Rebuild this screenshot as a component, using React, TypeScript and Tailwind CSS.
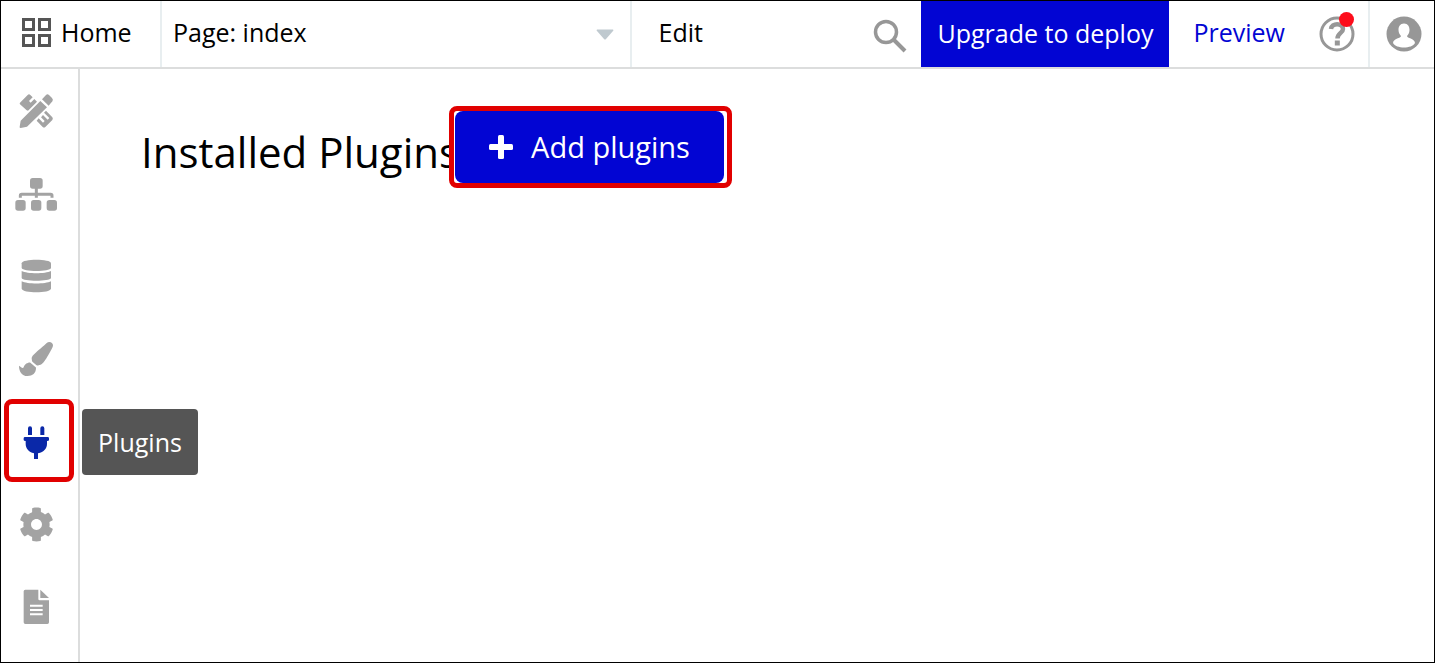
import React from 'react';
import { FaCog, FaPaintBrush } from 'react-icons/fa';

const DesignIcon: React.FC = () => (
  <svg viewBox="45 30 126 126" className="size-[42px]" fill="currentColor" aria-hidden="true">
    <path d="M62 122 L121 63 L141 82 L81 140 L62 144 Q58 144 59 140 Z" />
    <path d="M126 58 L138 45 Q142 41 147 45 L156 54 Q161 59 157 64 L146 77 Z" />
    <path d="M60 68 L83 45 Q87 41 91 45 L98 52 L87 63 L92 68 L103 57 L111 65 L84 92 L80 91 L60 73 Q58 70 60 68 Z" />
    <path d="M138 92 L157 112 Q160 116 157 120 L136 141 Q132 144 128 141 L110 122 L116 115 L129 128 L134 123 L123 112 L129 105 L143 119 L148 114 L132 98 Z" />
  </svg>
);

const SitemapIcon: React.FC = () => (
  <svg viewBox="45 276 126 126" className="size-[42px]" fill="currentColor" aria-hidden="true">
    <rect x="90" y="291" width="38" height="32" rx="8" />
    <rect x="46" y="357" width="31" height="32" rx="8" />
    <rect x="93" y="357" width="31" height="32" rx="8" />
    <rect x="140" y="357" width="31" height="32" rx="8" />
    <path
      d="M109 320V350M61 350V344Q61 340 65 340H152Q156 340 156 344V350"
      fill="none"
      stroke="currentColor"
      strokeWidth="9"
    />
  </svg>
);

const DataIcon: React.FC = () => (
  <svg viewBox="45 45 126 126" className="size-[42px]" fill="currentColor" aria-hidden="true">
    <path d="M65 70C65 56 153 56 153 70V84C150 96 68 96 65 84Z" />
    <path d="M65 93C82 102 136 102 153 93V114C150 125 68 125 65 114Z" />
    <path d="M65 124C82 133 136 133 153 124V146C150 160 68 160 65 146Z" />
  </svg>
);

const PlugIcon: React.FC = () => (
  <svg viewBox="45 90 126 126" className="size-[42px]" fill="currentColor" aria-hidden="true">
    <path d="M84 132V112Q84 106 90 106T96 112V132ZM121 132V112Q121 106 127 106T133 112V132Z" />
    <path d="M75 138H143Q147 138 147 142V147Q147 150 141 150V158C141 172 132 183 114 187V204H102V187C86 183 77 172 77 158V150Q71 150 71 147V142Q71 138 75 138Z" />
  </svg>
);

const LogsIcon: React.FC = () => (
  <svg viewBox="45 288 126 126" className="size-[42px]" fill="currentColor" aria-hidden="true">
    <path d="M76 299H115V327Q115 331 119 331H147V397Q147 402 142 402H76Q71 402 71 397V304Q71 299 76 299Z" />
    <path d="M121 299L147 324H121Z" />
    <path d="M90 347H128M90 360H128M90 373H128" stroke="#fff" strokeWidth="6" />
  </svg>
);

const tabs = [
  { label: 'Design', icon: <DesignIcon /> },
  { label: 'Workflow', icon: <SitemapIcon /> },
  { label: 'Data', icon: <DataIcon /> },
  { label: 'Styles', icon: <FaPaintBrush className="size-[34px]" /> },
  { label: 'Plugins', icon: <PlugIcon />, active: true },
  { label: 'Settings', icon: <FaCog className="size-[35px]" /> },
  { label: 'Logs', icon: <LogsIcon /> },
];

const Header: React.FC = () => (
  <header className="flex h-[68px] shrink-0 border-b-2 border-[#dcdddd] text-[25px]">
    <a href="#" className="flex w-[161px] items-center gap-2 border-r-2 border-[#e8eef0] pb-0.5 pl-5">
      <svg viewBox="0 0 32 32" className="size-8" fill="none" stroke="#555" strokeWidth="3" aria-hidden="true">
        <path d="M2.500 2.500h10v10h-10zM18.500 2.500h10v10h-10zM2.500 18.500h10v10h-10zM18.500 18.500h10v10h-10z" />
      </svg>
      Home
    </a>
    <div className="relative flex flex-1 border-r-2 border-[#e8eef0]">
      <select aria-label="Page" className="w-full appearance-none bg-transparent pb-0.5 pl-[11px] outline-none">
        <option>Page: index</option>
      </select>
      <svg viewBox="0 0 18 11" className="pointer-events-none absolute right-4 top-7 h-[11px] w-[18px]" aria-hidden="true">
        <path d="M1 0.500H17Q18 1 17 2L10 10Q9 11 8 10L1 2Q0 1 1 0.500Z" fill="#bfc9cf" />
      </svg>
    </div>
    <div className="flex w-[289px] items-center justify-between pl-[26px] pr-[13px]">
      <button type="button" className="pb-0.5">Edit</button>
      <button type="button" aria-label="Search" className="pt-1 text-[#979797]">
        <svg viewBox="0 0 36 36" className="size-9" fill="none" stroke="currentColor" aria-hidden="true">
          <circle cx="14" cy="14" r="10.500" strokeWidth="3.500" />
          <path d="M22 22L33 33" strokeWidth="4" />
        </svg>
      </button>
    </div>
    <button type="button" className="w-[248px] bg-[#0205d3] text-white">Upgrade to deploy</button>
    <a href="#" className="flex items-center pb-0.5 pl-6 text-[#0205d3]">Preview</a>
    <div className="flex w-[85px] items-center justify-end border-r-2 border-[#e8eef0] pr-[13px]">
      <button type="button" aria-label="Help" className="relative text-[#979797]">
        <svg viewBox="0 0 36 36" className="size-9" fill="none" stroke="currentColor" aria-hidden="true">
          <circle cx="18" cy="18" r="16" strokeWidth="3" />
          <path d="M12 13C12.500 6.500 24 6.500 24 13C24 17 18.500 17 18.500 22.500" strokeWidth="4.500" />
          <path d="M15.800 24.500h5v5h-5z" fill="currentColor" stroke="none" />
        </svg>
        <span className="absolute -top-1 right-px size-[15px] rounded-full bg-[#fd0d1b]" />
      </button>
    </div>
    <button type="button" aria-label="Account" className="flex w-16 items-center justify-center pl-1">
      <svg viewBox="0 0 36 36" className="size-9" aria-hidden="true">
        <circle cx="18" cy="18" r="17.500" fill="#979797" />
        <path
          d="M18 7.500C22 7.500 23.500 10.500 23.500 14C23.500 17 22 19 21 20C21 22.500 28.500 22 29 27C26 33 10 33 7 27C7.500 22 15 22.500 15 20C14 19 12.500 17 12.500 14C12.500 10.500 14 7.500 18 7.500Z"
          fill="#fff"
        />
      </svg>
    </button>
  </header>
);

const Sidebar: React.FC = () => (
  <nav className="flex w-[79px] shrink-0 flex-col border-r-2 border-[#dcdddd] pb-[15px] pl-[3px] text-[#a3a3a3]">
    {tabs.map((tab) => (
      <div key={tab.label} className="relative flex flex-1">
        <button
          type="button"
          aria-label={tab.label}
          className={
            tab.active
              ? 'flex w-[70px] items-center justify-center rounded-lg border-[5px] border-[#e10000] pr-[6px] pt-0.5 text-[#0a28a8]'
              : 'flex w-[70px] items-center justify-center rounded-lg border-[5px] border-transparent pr-[6px] pt-0.5'
          }
        >
          {tab.icon}
        </button>
        {tab.active && (
          <span
            role="tooltip"
            className="absolute left-[78px] top-[10px] flex h-[66px] w-[116px] items-center justify-center rounded-sm bg-[#555] text-[25px] text-white"
          >
            {tab.label}
          </span>
        )}
      </div>
    ))}
  </nav>
);

const App: React.FC = () => {
  return (
    <div className="flex min-h-screen flex-col border border-black bg-white font-['Open_Sans',sans-serif] text-black">
      <Header />
      <div className="flex flex-1">
        <Sidebar />
        <main className="flex flex-1 items-start pl-[61px] pt-[37px]">
          <h1 className="whitespace-nowrap pt-4 text-[42px] leading-[60px]">Installed Plugins</h1>
          <div className="-ml-[10px] rounded-lg border-[5px] border-[#e10000] bg-white pl-px pr-[3px]">
            <button
              type="button"
              className="flex h-[72px] w-[269px] items-center justify-center gap-[18px] rounded-lg bg-[#0205d3] pb-px text-[29px] text-white"
            >
              <svg viewBox="0 0 24 24" className="size-6" fill="currentColor" aria-hidden="true">
                <rect x="9" y="0" width="6" height="24" rx="1.500" />
                <rect x="0" y="9" width="24" height="6" rx="1.500" />
              </svg>
              Add plugins
            </button>
          </div>
        </main>
      </div>
    </div>
  );
};

export default App;
